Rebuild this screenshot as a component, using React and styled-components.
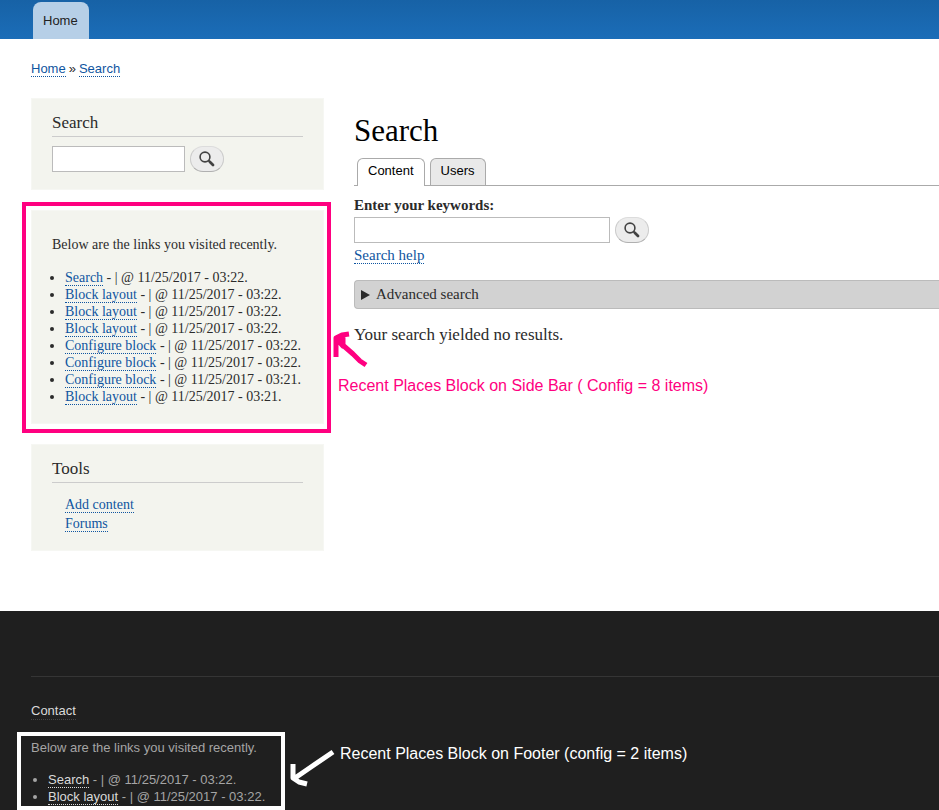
import React from 'react';
import styled, { createGlobalStyle } from 'styled-components';

const sans = '"Liberation Sans", Arial, sans-serif';
const serif = '"Liberation Serif", Georgia, serif';

const GlobalStyle = createGlobalStyle`
  *, *::before, *::after { box-sizing: border-box; }
  html { background: #1f1f1f; }
  body { margin: 0; overflow-x: hidden; font-family: ${serif}; color: #2b2b2b; background: #fff; }
  h1, h2, p, ul { margin: 0; padding: 0; font-weight: normal; }
`;

const Page = styled.div`
  position: relative;
  overflow: hidden;
`;

const Header = styled.header`
  display: flex;
  align-items: flex-end;
  height: 39px;
  padding-left: 33px;
  background: linear-gradient(#1762a6, #1b6db8);
`;

const MenuTab = styled.a`
  padding: 0 11px 0 10px;
  height: 37px;
  border-radius: 8px 8px 0 0;
  background: #b6cfe7;
  color: #222;
  font: 13px/37px ${sans};
  text-decoration: none;
`;

const Breadcrumb = styled.nav`
  display: flex;
  gap: 3px;
  padding: 22px 31px 0;
  font: 13px/15px ${sans};
`;

const Link = styled.a`
  color: #0f55a0;
  text-decoration: none;
  border-bottom: 1px dotted #0f55a0;
`;

const Columns = styled.div`
  display: grid;
  grid-template-columns: 293px minmax(0, 1fr);
  gap: 30px;
  padding: 21px 0 60px 31px;
`;

const Sidebar = styled.aside`
  display: flex;
  flex-direction: column;
  gap: 20px;
`;

const Block = styled.section`
  position: relative;
  padding: ${(p) => (p.$untitled ? '24px 20px 18px' : '14px 20px 17px')};
  border: 1px solid #f6f7f3;
  background: #f3f4ee;
`;

const BlockTitle = styled.h2`
  padding-bottom: 3px;
  border-bottom: 1px solid #ccc;
  font-size: 17px;
  line-height: 20px;
`;

const SearchRow = styled.form`
  display: flex;
  gap: 5px;
  padding-top: ${(p) => (p.$spaced ? '9px' : '2px')};
`;

const TextBox = styled.input`
  width: ${(p) => (p.$wide ? '256px' : '133px')};
  height: 26px;
  padding: 2px 4px;
  border: 1px solid #bbb;
  border-radius: 0;
  background: #fff;
  font: 14px ${serif};
`;

const SearchButton = styled.button`
  display: flex;
  align-items: center;
  justify-content: center;
  width: 34px;
  height: 26px;
  padding: 0 1px 1px 0;
  border: 1px solid;
  border-color: #dcdcdc #cacaca #b0b0b0;
  border-radius: 13px;
  background: #ececec;
`;

const Text = styled.p`
  font-size: 14px;
  line-height: 20px;
`;

const RecentList = styled.ul`
  padding: ${(p) => (p.$footer ? '15px 0 0 17px' : '14px 0 0 13px')};
  font-size: ${(p) => (p.$footer ? '13px' : '14px')};
  line-height: 17px;
`;

const ToolList = styled.ul`
  padding: 12px 0 0 13px;
  list-style: none;
  font-size: 14px;
  line-height: 19px;
`;

const Outline = styled.div`
  position: absolute;
  inset: ${(p) => p.$inset};
  border: 4px solid ${(p) => p.$color};
  pointer-events: none;
`;

const Arrow = styled.svg`
  position: absolute;
  left: ${(p) => p.$left};
  top: ${(p) => p.$top};
  fill: none;
  stroke: ${(p) => p.$color};
  stroke-width: 5;
  stroke-linejoin: round;
`;

const Caption = styled.div`
  position: absolute;
  left: ${(p) => p.$left};
  top: ${(p) => p.$top};
  color: ${(p) => p.$color};
  font: 16px/20px ${sans};
  white-space: nowrap;
`;

const Main = styled.main`
  padding-top: 14px;
`;

const Title = styled.h1`
  color: #000;
  font-size: 31px;
  line-height: 38px;
`;

const Tabs = styled.nav`
  display: flex;
  gap: 5px;
  margin-top: 8px;
  padding-left: 3px;
  border-bottom: 1px solid #aaa;
`;

const Tab = styled.a`
  height: ${(p) => (p.$active ? '28px' : '27px')};
  margin-bottom: ${(p) => (p.$active ? '-1px' : '0')};
  padding: 0 10px;
  border: 1px solid #aaa;
  border-bottom: 0;
  border-radius: 6px 6px 0 0;
  background: ${(p) => (p.$active ? '#fff' : '#e9e9e9')};
  color: #000;
  font: 13px/24px ${sans};
  text-decoration: none;
`;

const Label = styled.label`
  display: block;
  margin-top: 10px;
  font-size: 15px;
  font-weight: bold;
  line-height: 19px;
`;

const Help = styled.p`
  padding-top: 3px;
  font-size: 15px;
  line-height: 19px;
`;

const Advanced = styled.details`
  margin: 15px 0 0;
  border: 1px solid #bbb;
  border-right: 0;
  border-radius: 4px 0 0 4px;
  background: #d2d2d2;
`;

const Summary = styled.summary`
  display: flex;
  align-items: center;
  gap: 6px;
  padding-left: 6px;
  font-size: 15px;
  line-height: 27px;
`;

const Result = styled.p`
  padding-top: 15px;
  font-size: 17px;
  line-height: 22px;
`;

const Footer = styled.footer`
  padding: 65px 0 0 31px;
  background: #1f1f1f;
  color: #a5a5a5;
  font: 13px/17px ${sans};
`;

const FooterInner = styled.div`
  padding-top: 25px;
  border-top: 1px solid #353535;
`;

const FooterLink = styled.a`
  padding-bottom: ${(p) => (p.$faint ? '1px' : '0')};
  color: #dadada;
  text-decoration: none;
  border-bottom: 1px dotted ${(p) => (p.$faint ? '#444' : '#dadada')};
`;

const FooterBlock = styled.section`
  position: relative;
  width: 254px;
  margin-top: 20px;
  padding-bottom: 5px;
`;

const PINK = '#ff0080';
const sidebarVisits = [
  ['Search', '03:22'],
  ['Block layout', '03:22'],
  ['Block layout', '03:22'],
  ['Block layout', '03:22'],
  ['Configure block', '03:22'],
  ['Configure block', '03:22'],
  ['Configure block', '03:21'],
  ['Block layout', '03:21'],
];

function Visits({ items, LinkType, footer }) {
  return (
    <RecentList $footer={footer}>
      {items.map(([name, time], i) => (
        <li key={i}>
          <LinkType href="#">{name}</LinkType> - | @ 11/25/2017 - {time}.
        </li>
      ))}
    </RecentList>
  );
}

function Magnifier() {
  return (
    <svg width="16" height="16" viewBox="0 0 16 16" fill="none" stroke="#424242" aria-hidden="true">
      <circle cx="6" cy="6" r="4.9" strokeWidth="1.6" />
      <path d="M9.4 9.4l1.6 1.6" strokeWidth="2" />
      <path d="M11 11l3 3" strokeWidth="2.8" strokeLinecap="round" />
    </svg>
  );
}

export default function App() {
  return (
    <Page>
      <GlobalStyle />
      <Header>
        <MenuTab href="#">Home</MenuTab>
      </Header>
      <Breadcrumb aria-label="Breadcrumb">
        <Link href="#">Home</Link>
        <span>»</span>
        <Link href="#">Search</Link>
      </Breadcrumb>
      <Columns>
        <Sidebar>
          <Block>
            <BlockTitle>Search</BlockTitle>
            <SearchRow $spaced role="search">
              <TextBox type="search" aria-label="Search" />
              <SearchButton type="button" aria-label="Search"><Magnifier /></SearchButton>
            </SearchRow>
          </Block>
          <Block $untitled>
            <Text>Below are the links you visited recently.</Text>
            <Visits items={sidebarVisits} LinkType={Link} />
            <Outline $inset="-9px -8px -10px -10px" $color={PINK} />
            <Arrow $left="300px" $top="119px" $color={PINK} width="40" height="40" viewBox="0 0 40 40">
              <path d="M34 35L28 31 21 24 5 10M17 4L10 5 4 8V27M4 8l7 8V8z" />
            </Arrow>
            <Caption $left="306px" $top="165px" $color={PINK}>
              Recent Places Block on Side Bar ( Config = 8 items)
            </Caption>
          </Block>
          <Block>
            <BlockTitle>Tools</BlockTitle>
            <ToolList>
              <li><Link href="#">Add content</Link></li>
              <li><Link href="#">Forums</Link></li>
            </ToolList>
          </Block>
        </Sidebar>
        <Main>
          <Title>Search</Title>
          <Tabs aria-label="Search type">
            <Tab href="#" $active>Content</Tab>
            <Tab href="#">Users</Tab>
          </Tabs>
          <Label htmlFor="keywords">Enter your keywords:</Label>
          <SearchRow>
            <TextBox id="keywords" type="search" $wide />
            <SearchButton type="button" aria-label="Search"><Magnifier /></SearchButton>
          </SearchRow>
          <Help><Link href="#">Search help</Link></Help>
          <Advanced>
            <Summary>
              <svg width="9" height="10" viewBox="0 0 9 10" fill="#2b2b2b" aria-hidden="true">
                <path d="M0 0L9 5 0 10z" />
              </svg>
              Advanced search
            </Summary>
          </Advanced>
          <Result>Your search yielded no results.</Result>
        </Main>
      </Columns>
      <Footer>
        <FooterInner>
          <FooterLink href="#" $faint>Contact</FooterLink>
          <FooterBlock>
            <p>Below are the links you visited recently.</p>
            <Visits footer items={sidebarVisits.slice(0, 2)} LinkType={FooterLink} />
            <Outline $inset="-7px 0 0 -14px" $color="#fff" />
            <Arrow $left="258px" $top="8px" $color="#fff" width="48" height="42" viewBox="0 0 48 42">
              <path d="M44 5L22 20 6 31M4 17V31L10 35 18 37" />
            </Arrow>
            <Caption $left="309px" $top="5px" $color="#fff">
              Recent Places Block on Footer (config = 2 items)
            </Caption>
          </FooterBlock>
        </FooterInner>
      </Footer>
    </Page>
  );
}
